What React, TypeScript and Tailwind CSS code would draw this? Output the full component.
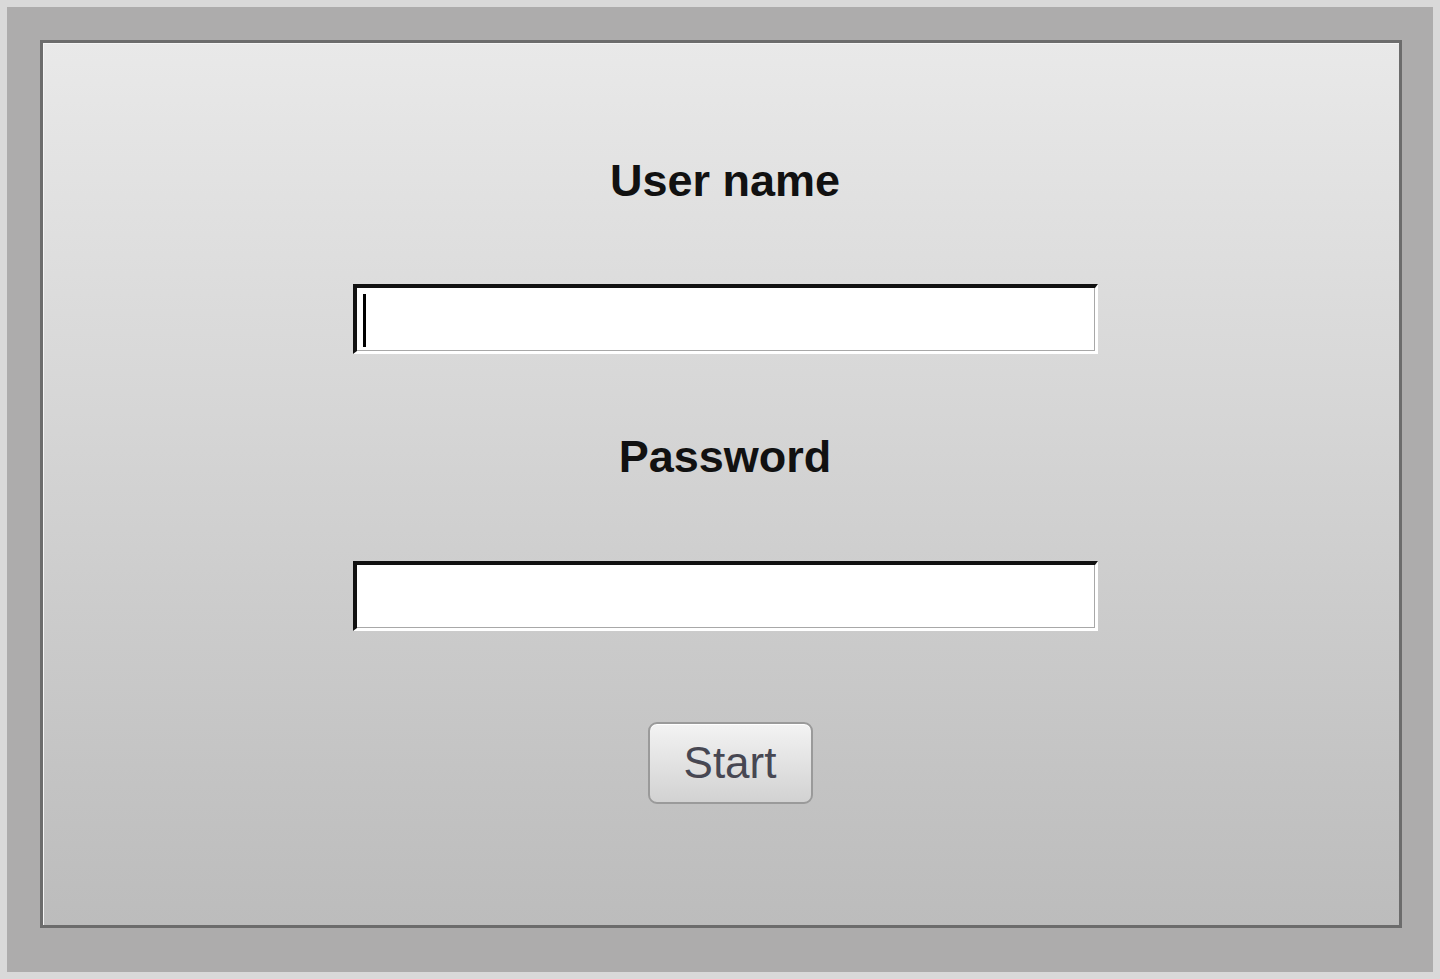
export default function App() {
  return (
    <div className="h-[979px] w-full bg-[#d9d9d9] p-[7px] font-['Liberation_Sans',Arial,sans-serif]">
      <div className="h-full w-full bg-[#adacac] pt-[33px] pl-[33px] pr-[31px] pb-[44px]">
        <div className="h-full w-full border-[3px] border-[#6c6c6c] bg-gradient-to-b from-[#e9e9e9] to-[#bcbcbc] shadow-[inset_1px_1px_0_#f4f4f4]">
          <div className="flex flex-col items-center pl-[8px] pt-[112px]">
            <p className="text-[45px] leading-[52px] font-bold text-[#111]">User name</p>
            <div className="relative mt-[77px]">
              <input
                type="text"
                className="block h-[70px] w-[745px] border-t-[4px] border-l-[4px] border-r-[3px] border-b-[3px] border-t-[#111] border-l-[#111] border-r-white border-b-white bg-white shadow-[inset_-1px_-1px_0_#a8a8a8] outline-none"
              />
              <span className="absolute left-[10px] top-[10px] h-[53px] w-[3px] bg-black" />
            </div>
            <p className="mt-[77px] text-[45px] leading-[52px] font-bold text-[#111]">Password</p>
            <input
              type="password"
              className="mt-[78px] block h-[70px] w-[745px] border-t-[4px] border-l-[4px] border-r-[3px] border-b-[3px] border-t-[#111] border-l-[#111] border-r-white border-b-white bg-white shadow-[inset_-1px_-1px_0_#a8a8a8] outline-none"
            />
            <button className="ml-[10px] mt-[91px] h-[82px] w-[165px] rounded-[9px] border-2 border-[#9a9a9a] bg-gradient-to-b from-[#f3f3f3] to-[#d2d2d2] text-[44px] leading-none text-[#474752] shadow-[inset_0_1px_0_#ffffff]">
              Start
            </button>
          </div>
        </div>
      </div>
    </div>
  )
}
